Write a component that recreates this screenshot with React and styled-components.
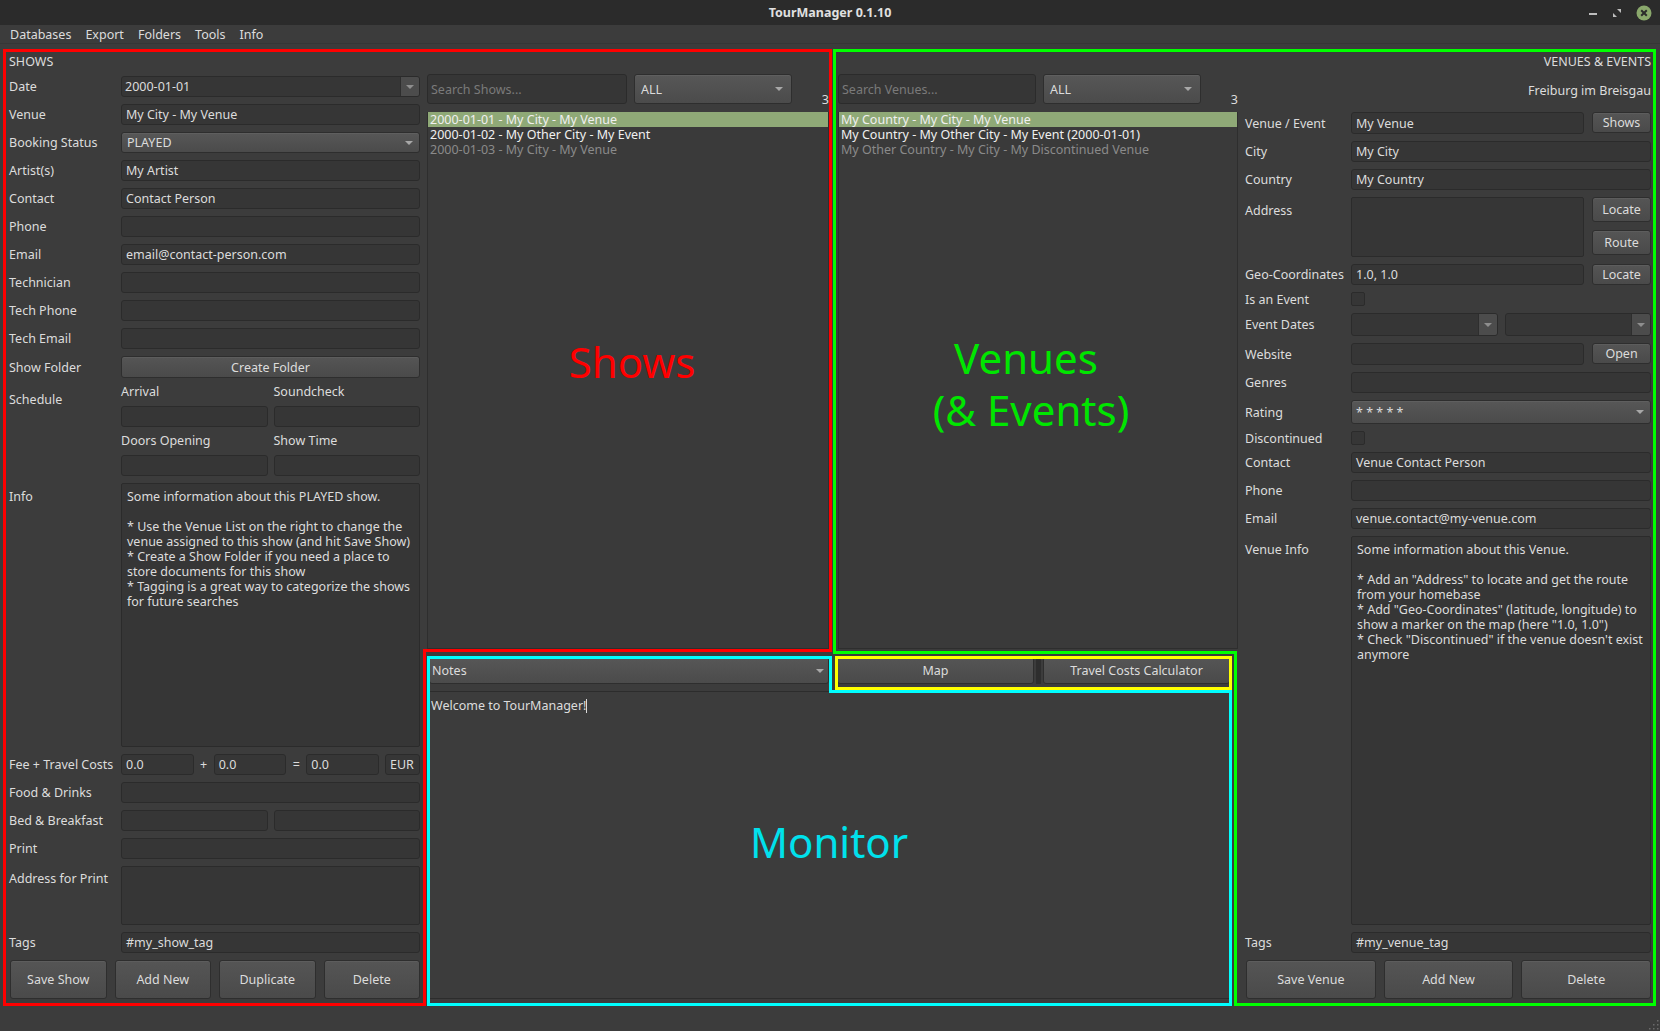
import React from 'react';
import styled, { createGlobalStyle } from 'styled-components';

const GlobalStyle = createGlobalStyle`
  html, body {
    margin: 0;
    padding: 0;
    background: #3c3c3c;
  }
  body {
    font-family: "Noto Sans", "DejaVu Sans", sans-serif;
    font-size: 12px;
    color: #dcdcdc;
  }
  * {
    box-sizing: border-box;
  }
`;

const Window = styled.div`
  position: relative;
  width: 1660px;
  height: 1031px;
  display: flex;
  flex-direction: column;
  background: #3c3c3c;
  overflow: hidden;
`;

/* title + menu */

const TitleBar = styled.div`
  height: 25px;
  flex: none;
  background: #2b2b2b;
  display: grid;
  grid-template-columns: 1fr auto 1fr;
  align-items: center;
`;

const Title = styled.div`
  font-weight: bold;
  font-size: 12.5px;
  color: #e0e0e0;
`;

const WinControls = styled.div`
  justify-self: end;
  display: flex;
  align-items: center;
  gap: 14px;
  padding-right: 8px;
`;

const MenuBar = styled.div`
  height: 19px;
  flex: none;
  display: flex;
  align-items: center;
  padding-left: 3px;
  border-bottom: 1px solid #363636;
`;

const MenuItem = styled.div`
  padding: 0 7px;
  font-size: 12.5px;
  color: #dcdcdc;
`;

/* main body */

const Body = styled.div`
  flex: 1;
  display: flex;
  gap: 7px;
  padding: 10px 9px 32px 9px;
  min-height: 0;
`;

const Column = styled.div`
  width: ${p => p.$w}px;
  flex: none;
  display: flex;
  flex-direction: column;
  min-height: 0;
`;

const PanelTitle = styled.div`
  height: 15px;
  line-height: 15px;
  font-size: 12.5px;
  text-align: ${p => (p.$right ? 'right' : 'left')};
  margin-bottom: ${p => p.$mb || 0}px;
`;

const FormGrid = styled.div`
  flex: 1;
  display: grid;
  grid-template-columns: ${p => p.$labelW}px 1fr;
  grid-template-rows: ${p => p.$rows};
  row-gap: 7px;
  min-height: 0;
`;

const Label = styled.div`
  align-self: ${p => (p.$top ? 'start' : 'center')};
  padding-top: ${p => p.$pt || 0}px;
  font-size: 12.5px;
  white-space: nowrap;
  color: #dcdcdc;
`;

const Field = styled.div`
  height: ${p => (p.$h ? `${p.$h}px` : 'auto')};
  width: ${p => (p.$w ? `${p.$w}px` : 'auto')};
  flex: ${p => (p.$w ? 'none' : '1')};
  margin-left: ${p => p.$ml || 0}px;
  min-width: 0;
  background: #363636;
  border: 1px solid #2b2b2b;
  border-radius: 3px;
  padding: 0 4px;
  display: flex;
  align-items: center;
  font-size: 12.5px;
  white-space: nowrap;
  overflow: hidden;
  color: #dcdcdc;
`;

const TextArea = styled.div`
  flex: 1;
  min-height: 0;
  background: #363636;
  border: 1px solid #2b2b2b;
  border-radius: 2px;
  padding: 5px 5px;
  font-size: 12.5px;
  line-height: 15px;
  white-space: pre-wrap;
  color: #dcdcdc;
  overflow: hidden;
`;

const Button = styled.div`
  height: ${p => p.$h || 21}px;
  width: ${p => (p.$w ? `${p.$w}px` : 'auto')};
  flex: ${p => (p.$w ? 'none' : '1')};
  display: flex;
  align-items: center;
  justify-content: center;
  background: linear-gradient(#555555, #4a4a4a);
  border: 1px solid #2e2e2e;
  border-radius: 3px;
  box-shadow: inset 0 1px 0 rgba(255, 255, 255, 0.05);
  font-size: 12.5px;
  color: #dcdcdc;
  white-space: nowrap;
`;

const Arrow = styled.span`
  width: 0;
  height: 0;
  border-left: 4px solid transparent;
  border-right: 4px solid transparent;
  border-top: 4px solid #a8a8a8;
  margin-left: auto;
  margin-right: ${p => p.$mr || 6}px;
`;

const Combo = styled.div`
  height: ${p => p.$h || 21}px;
  width: ${p => (p.$w ? `${p.$w}px` : 'auto')};
  flex: ${p => (p.$w ? 'none' : '1')};
  display: flex;
  align-items: center;
  padding-left: ${p => p.$pl || 5}px;
  background: linear-gradient(#575757, #4b4b4b);
  border: 1px solid #2e2e2e;
  border-radius: 3px;
  box-shadow: inset 0 1px 0 rgba(255, 255, 255, 0.05);
  font-size: 12.5px;
  color: #dcdcdc;
`;

const DateEdit = styled.div`
  height: 100%;
  flex: 1;
  min-width: 0;
  display: flex;
  align-items: stretch;
  background: #363636;
  border: 1px solid #2b2b2b;
  border-radius: 3px;
  font-size: 12.5px;
  overflow: hidden;
`;

const DateText = styled.div`
  flex: 1;
  display: flex;
  align-items: center;
  padding-left: 3px;
`;

const DateButton = styled.div`
  width: 19px;
  display: flex;
  align-items: center;
  justify-content: center;
  background: #4c4c4c;
  border-left: 1px solid #2e2e2e;
`;

const SmallArrow = styled.span`
  width: 0;
  height: 0;
  border-left: 4px solid transparent;
  border-right: 4px solid transparent;
  border-top: 4px solid #8e8e8e;
`;

const Checkbox = styled.div`
  width: 14px;
  height: 14px;
  align-self: center;
  background: #363636;
  border: 1px solid #2b2b2b;
  border-radius: 2px;
`;

const Row = styled.div`
  display: flex;
  align-items: stretch;
  gap: ${p => (p.$gap != null ? p.$gap : 8)}px;
  min-width: 0;
`;

const Stack = styled.div`
  display: flex;
  flex-direction: column;
  gap: 8px;
`;

const Symbol = styled.div`
  width: 20px;
  flex: none;
  text-align: center;
  align-self: center;
  font-size: 12.5px;
`;

const SubGrid = styled.div`
  display: grid;
  grid-template-columns: 1fr 1fr;
  grid-template-rows: 14px 21px 14px 21px;
  column-gap: 6px;
  row-gap: 7px;
`;

const SubLabel = styled.div`
  line-height: 14px;
  font-size: 12.5px;
`;

const ButtonBar = styled.div`
  grid-column: 1 / -1;
  display: flex;
  gap: 8px;
  padding-left: 1px;
`;

/* lists in the centre */

const ListPair = styled.div`
  flex: 1;
  display: flex;
  gap: 9px;
  min-height: 0;
  padding-top: 20px;
`;

const ListColumn = styled.div`
  width: ${p => p.$w}px;
  display: flex;
  flex-direction: column;
  gap: 8px;
`;

const SearchRow = styled.div`
  height: 30px;
  flex: none;
  display: flex;
  gap: 7px;
`;

const SearchInput = styled.div`
  width: ${p => p.$w}px;
  background: #363636;
  border: 1px solid #2b2b2b;
  border-radius: 3px;
  display: flex;
  align-items: center;
  padding-left: 3px;
  font-size: 12.5px;
  color: #7a7a7a;
`;

const Count = styled.div`
  flex: 1;
  align-self: flex-end;
  text-align: right;
  font-size: 12.5px;
  line-height: 15px;
  margin-bottom: -3px;
`;

const ListBox = styled.div`
  flex: 1;
  background: #3a3a3a;
  border: 1px solid #2e2e2e;
  border-top: none;
`;

const ListRow = styled.div`
  height: 15px;
  line-height: 15px;
  padding-left: 2px;
  font-size: 12.5px;
  white-space: nowrap;
  background: ${p => (p.$selected ? '#8fa977' : 'transparent')};
  color: ${p => (p.$dim ? '#8a8a8a' : '#f0f0f0')};
`;

/* monitor */

const Monitor = styled.div`
  height: 342px;
  flex: none;
  margin: 8px 8px 0 2px;
  display: flex;
  flex-direction: column;
  gap: 7px;
`;

const MonitorBar = styled.div`
  height: 27px;
  flex: none;
  display: flex;
  gap: 8px;
`;

const TabDivider = styled.div`
  width: 5px;
  background: #2e2e2e;
  margin: 0 -6px 0 -6px;
  flex: none;
`;

const NotesArea = styled.div`
  flex: 1;
  border-top: 1px solid #2c2c2c;
  border-bottom: 1px solid #2c2c2c;
  padding: 6px 2px;
  font-size: 12.5px;
  line-height: 15px;
`;

const Caret = styled.span`
  display: inline-block;
  width: 1px;
  height: 14px;
  background: #dcdcdc;
  vertical-align: -3px;
`;

const Grip = styled.svg`
  position: absolute;
  right: 1px;
  bottom: 1px;
`;

/* annotation overlay */

const Overlay = styled.svg`
  position: absolute;
  left: 0;
  top: 0;
  pointer-events: none;
`;

const Note = styled.div`
  position: absolute;
  left: ${p => p.$x}px;
  top: ${p => p.$y}px;
  transform: translate(-50%, -50%);
  font-family: "Noto Sans", sans-serif;
  font-size: 42px;
  line-height: 40px;
  text-align: center;
  white-space: nowrap;
  color: ${p => p.$color};
  pointer-events: none;
`;

const showInfo = `Some information about this PLAYED show.

* Use the Venue List on the right to change the venue assigned to this show (and hit Save Show)
* Create a Show Folder if you need a place to store documents for this show
* Tagging is a great way to categorize the shows for future searches`;

const venueInfo = `Some information about this Venue.

* Add an "Address" to locate and get the route from your homebase
* Add "Geo-Coordinates" (latitude, longitude) to show a marker on the map (here "1.0, 1.0")
* Check "Discontinued" if the venue doesn't exist anymore`;

function WindowButtons() {
  return (
    <WinControls>
      <svg width="10" height="10" viewBox="0 0 10 10">
        <rect x="1" y="5" width="8" height="2" fill="#bdbdbd" />
      </svg>
      <svg width="10" height="10" viewBox="0 0 10 10">
        <path d="M5 1 L9 1 L9 5 Z" fill="#bdbdbd" />
        <path d="M1 5 L1 9 L5 9 Z" fill="#bdbdbd" />
      </svg>
      <svg width="16" height="16" viewBox="0 0 16 16">
        <circle cx="8" cy="8" r="7.5" fill="#8aa86c" />
        <path d="M5.2 5.2 L10.8 10.8 M10.8 5.2 L5.2 10.8" stroke="#2b2b2b" strokeWidth="2" />
      </svg>
    </WinControls>
  );
}

function DateField({ value }) {
  return (
    <DateEdit>
      <DateText>{value}</DateText>
      <DateButton><SmallArrow /></DateButton>
    </DateEdit>
  );
}

function ShowForm() {
  const rows = 'repeat(10, 21px) 22px 91px 1fr repeat(4, 21px) 59px 21px 39px';
  return (
    <Column $w={411}>
      <PanelTitle $mb={7}>SHOWS</PanelTitle>
      <FormGrid $labelW={112} $rows={rows}>
        <Label>Date</Label>
        <DateField value="2000-01-01" />
        <Label>Venue</Label>
        <Field>My City - My Venue</Field>
        <Label>Booking Status</Label>
        <Combo>PLAYED<Arrow /></Combo>
        <Label>Artist(s)</Label>
        <Field>My Artist</Field>
        <Label>Contact</Label>
        <Field>Contact Person</Field>
        <Label>Phone</Label>
        <Field />
        <Label>Email</Label>
        <Field>email@contact-person.com</Field>
        <Label>Technician</Label>
        <Field />
        <Label>Tech Phone</Label>
        <Field />
        <Label>Tech Email</Label>
        <Field />
        <Label>Show Folder</Label>
        <Button $h={22}>Create Folder</Button>
        <Label $top $pt={6}>Schedule</Label>
        <SubGrid>
          <SubLabel>Arrival</SubLabel>
          <SubLabel>Soundcheck</SubLabel>
          <Field />
          <Field />
          <SubLabel>Doors Opening</SubLabel>
          <SubLabel>Show Time</SubLabel>
          <Field />
          <Field />
        </SubGrid>
        <Label $top $pt={5}>Info</Label>
        <TextArea>{showInfo}</TextArea>
        <Label>Fee + Travel Costs</Label>
        <Row $gap={0}>
          <Field>0.0</Field>
          <Symbol>+</Symbol>
          <Field>0.0</Field>
          <Symbol>=</Symbol>
          <Field>0.0</Field>
          <Field $w={35} $ml={6}>EUR</Field>
        </Row>
        <Label>Food &amp; Drinks</Label>
        <Field />
        <Label>Bed &amp; Breakfast</Label>
        <Row $gap={6}>
          <Field />
          <Field />
        </Row>
        <Label>Print</Label>
        <Field />
        <Label $top $pt={4}>Address for Print</Label>
        <TextArea />
        <Label>Tags</Label>
        <Field>#my_show_tag</Field>
        <ButtonBar>
          <Button $h={39}>Save Show</Button>
          <Button $h={39}>Add New</Button>
          <Button $h={39}>Duplicate</Button>
          <Button $h={39}>Delete</Button>
        </ButtonBar>
      </FormGrid>
    </Column>
  );
}

const shows = [
  { text: '2000-01-01 - My City - My Venue', selected: true },
  { text: '2000-01-02 - My Other City - My Event' },
  { text: '2000-01-03 - My City - My Venue', dim: true },
];

const venues = [
  { text: 'My Country - My City - My Venue', selected: true },
  { text: 'My Country - My Other City - My Event (2000-01-01)' },
  { text: 'My Other Country - My City - My Discontinued Venue', dim: true },
];

function ListPanel({ width, searchW, placeholder, items }) {
  return (
    <ListColumn $w={width}>
      <SearchRow>
        <SearchInput $w={searchW}>{placeholder}</SearchInput>
        <Combo $w={158} $h={30} $pl={6}>ALL<Arrow $mr={8} /></Combo>
        <Count>{items.length}</Count>
      </SearchRow>
      <ListBox>
        {items.map(it => (
          <ListRow key={it.text} $selected={it.selected} $dim={it.dim}>{it.text}</ListRow>
        ))}
      </ListBox>
    </ListColumn>
  );
}

function Center() {
  return (
    <Column $w={811}>
      <ListPair>
        <ListPanel width={402} searchW={200} placeholder="Search Shows..." items={shows} />
        <ListPanel width={400} searchW={198} placeholder="Search Venues..." items={venues} />
      </ListPair>
      <Monitor>
        <MonitorBar>
          <Combo $w={400} $h={27} $pl={2}>Notes<Arrow $mr={4} /></Combo>
          <Button $w={197} $h={27}>Map</Button>
          <TabDivider />
          <Button $h={27}>Travel Costs Calculator</Button>
        </MonitorBar>
        <NotesArea>Welcome to TourManager!<Caret /></NotesArea>
      </Monitor>
    </Column>
  );
}

function VenueForm() {
  const rows = '22px 21px 21px 60px 21px 14px 23px 22px 21px 24px 14px 21px 21px 21px 1fr 21px 39px';
  return (
    <Column $w={406}>
      <PanelTitle $right $mb={14}>VENUES &amp; EVENTS</PanelTitle>
      <PanelTitle $right $mb={14}>Freiburg im Breisgau</PanelTitle>
      <FormGrid $labelW={106} $rows={rows}>
        <Label>Venue / Event</Label>
        <Row>
          <Field>My Venue</Field>
          <Button $w={59}>Shows</Button>
        </Row>
        <Label>City</Label>
        <Field>My City</Field>
        <Label>Country</Label>
        <Field>My Country</Field>
        <Label $top $pt={5}>Address</Label>
        <Row>
          <TextArea />
          <Stack>
            <Button $w={59} $h={25}>Locate</Button>
            <Button $w={59} $h={25}>Route</Button>
          </Stack>
        </Row>
        <Label>Geo-Coordinates</Label>
        <Row>
          <Field>1.0, 1.0</Field>
          <Button $w={59}>Locate</Button>
        </Row>
        <Label>Is an Event</Label>
        <Checkbox />
        <Label>Event Dates</Label>
        <Row $gap={7}>
          <DateField value="" />
          <DateField value="" />
        </Row>
        <Label>Website</Label>
        <Row>
          <Field />
          <Button $w={59}>Open</Button>
        </Row>
        <Label>Genres</Label>
        <Field />
        <Label>Rating</Label>
        <Combo $h={24} $pl={4}>* * * * *<Arrow /></Combo>
        <Label>Discontinued</Label>
        <Checkbox />
        <Label>Contact</Label>
        <Field>Venue Contact Person</Field>
        <Label>Phone</Label>
        <Field />
        <Label>Email</Label>
        <Field>venue.contact@my-venue.com</Field>
        <Label $top $pt={5}>Venue Info</Label>
        <TextArea>{venueInfo}</TextArea>
        <Label>Tags</Label>
        <Field>#my_venue_tag</Field>
        <ButtonBar>
          <Button $h={39}>Save Venue</Button>
          <Button $h={39}>Add New</Button>
          <Button $h={39}>Delete</Button>
        </ButtonBar>
      </FormGrid>
    </Column>
  );
}

export default function App() {
  return (
    <>
      <GlobalStyle />
      <Window>
        <TitleBar>
          <div />
          <Title>TourManager 0.1.10</Title>
          <WindowButtons />
        </TitleBar>
        <MenuBar>
          <MenuItem>Databases</MenuItem>
          <MenuItem>Export</MenuItem>
          <MenuItem>Folders</MenuItem>
          <MenuItem>Tools</MenuItem>
          <MenuItem>Info</MenuItem>
        </MenuBar>
        <Body>
          <ShowForm />
          <Center />
          <VenueForm />
        </Body>

        <Grip width="12" height="12" viewBox="0 0 12 12">
          {[[10, 2], [10, 6], [6, 6], [10, 10], [6, 10], [2, 10]].map(([x, y]) => (
            <rect key={`${x}-${y}`} x={x} y={y} width="1.5" height="1.5" fill="#6a6a6a" />
          ))}
        </Grip>

        <Overlay width="1660" height="1031" viewBox="0 0 1660 1031">
          <polygon points="4.5,50.5 830.5,50.5 830.5,650.5 424.5,650.5 424.5,1004.5 4.5,1004.5"
            fill="none" stroke="#ff0000" strokeWidth="3" />
          <polygon points="834.5,50.5 1654.5,50.5 1654.5,1004.5 1235.5,1004.5 1235.5,652.5 834.5,652.5"
            fill="none" stroke="#00ff00" strokeWidth="3" />
          <polygon points="428.5,657.5 830.5,657.5 830.5,691.5 1230.5,691.5 1230.5,1004.5 428.5,1004.5"
            fill="none" stroke="#00ffff" strokeWidth="3" />
          <rect x="836.5" y="657.5" width="394" height="31" fill="none" stroke="#ffff00" strokeWidth="3" />
        </Overlay>
        <Note $x={632} $y={362} $color="#ff0000">Shows</Note>
        <Note $x={1026} $y={358} $color="#00e600">Venues</Note>
        <Note $x={1031} $y={410} $color="#00e600">(&amp; Events)</Note>
        <Note $x={829} $y={842} $color="#00e1ec">Monitor</Note>
      </Window>
    </>
  );
}
